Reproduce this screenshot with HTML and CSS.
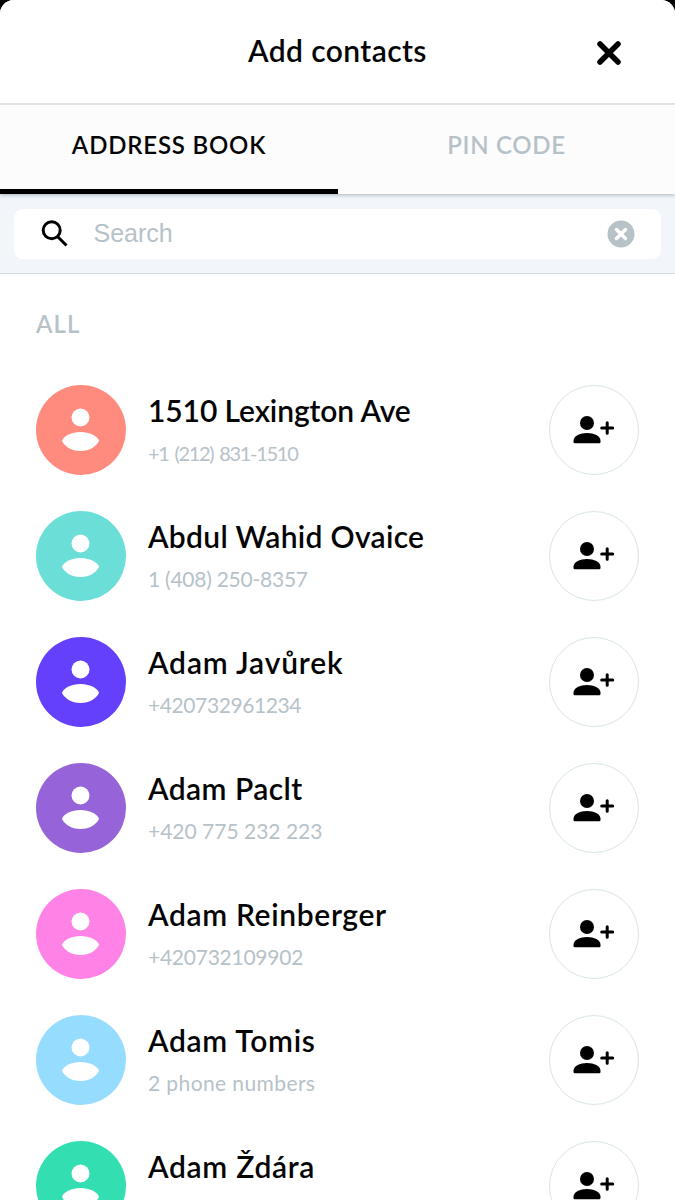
FILE: index.html
```html
<!DOCTYPE html>
<html lang="en">
<head>
<meta charset="utf-8">
<title>Add contacts</title>
<link rel="stylesheet" href="styles.css">
</head>
<body>
<svg class="symbols" aria-hidden="true">
  <symbol id="person" viewBox="0 0 90 90">
    <circle cx="44.5" cy="32.5" r="9"/>
    <path d="M26 55.700C28 50.500 35.500 47 44.500 47S61 50.500 63 55.700C61 61 53.500 66 44.500 66S28 61 26 55.700Z"/>
  </symbol>
  <symbol id="add-person" viewBox="0 0 42 28">
    <circle cx="14" cy="7" r="7"/>
    <path d="M.5 24.500C.5 20 7 17 14 17S27.500 20 27.500 24.500V26Q27.500 27.200 26.300 27.200H1.700Q.5 27.200 .5 26Z"/>
    <path class="plus" d="M34.200 6.700V17.300M28.700 12H39.700"/>
  </symbol>
</svg>
<div class="sheet">
  <header class="header">
    <h1 class="title">Add contacts</h1>
    <button class="close" aria-label="Close"><svg width="26" height="26" viewBox="0 0 26 26"><path d="M4 4L22 22M22 4L4 22"/></svg></button>
  </header>
  <nav class="tabs">
    <div class="tab active"><span class="label-address">ADDRESS BOOK</span></div>
    <div class="tab"><span class="label-pin">PIN CODE</span></div>
  </nav>
  <div class="search-bar">
    <div class="search">
      <svg class="magnifier" width="28" height="28" viewBox="0 0 28 28"><circle cx="10.700" cy="10.300" r="8.500"/><path d="M17 17L25.500 25.500"/></svg>
      <span class="placeholder">Search</span>
      <svg class="clear" width="28" height="28" viewBox="0 0 28 28"><circle cx="14" cy="14" r="13.500"/><path d="M9.500 9.500L18.500 18.500M18.500 9.500L9.500 18.500"/></svg>
    </div>
  </div>
  <main class="list">
    <h2 class="section">ALL</h2>
    <div class="contact">
      <svg class="avatar coral"><use href="#person"/></svg>
      <div class="info"><div class="name n1">1510 Lexington Ave</div><div class="phone p1">+1 (212) 831-1510</div></div>
      <button class="add" aria-label="Add"><svg width="42" height="28"><use href="#add-person"/></svg></button>
    </div>
    <div class="contact">
      <svg class="avatar teal"><use href="#person"/></svg>
      <div class="info"><div class="name n2">Abdul Wahid Ovaice</div><div class="phone p2">1 (408) 250-8357</div></div>
      <button class="add" aria-label="Add"><svg width="42" height="28"><use href="#add-person"/></svg></button>
    </div>
    <div class="contact">
      <svg class="avatar indigo"><use href="#person"/></svg>
      <div class="info"><div class="name n3">Adam Javůrek</div><div class="phone p3">+420732961234</div></div>
      <button class="add" aria-label="Add"><svg width="42" height="28"><use href="#add-person"/></svg></button>
    </div>
    <div class="contact">
      <svg class="avatar purple"><use href="#person"/></svg>
      <div class="info"><div class="name n4">Adam Paclt</div><div class="phone p4">+420 775 232 223</div></div>
      <button class="add" aria-label="Add"><svg width="42" height="28"><use href="#add-person"/></svg></button>
    </div>
    <div class="contact">
      <svg class="avatar pink"><use href="#person"/></svg>
      <div class="info"><div class="name n5">Adam Reinberger</div><div class="phone p5">+420732109902</div></div>
      <button class="add" aria-label="Add"><svg width="42" height="28"><use href="#add-person"/></svg></button>
    </div>
    <div class="contact">
      <svg class="avatar sky"><use href="#person"/></svg>
      <div class="info"><div class="name n6">Adam Tomis</div><div class="phone p6">2 phone numbers</div></div>
      <button class="add" aria-label="Add"><svg width="42" height="28"><use href="#add-person"/></svg></button>
    </div>
    <div class="contact">
      <svg class="avatar green"><use href="#person"/></svg>
      <div class="info"><div class="name n7">Adam Ždára</div></div>
      <button class="add" aria-label="Add"><svg width="42" height="28"><use href="#add-person"/></svg></button>
    </div>
  </main>
</div>
</body>
</html>
```
FILE: styles.css
```css
* { box-sizing: border-box; }
body { margin: 0; background: #000; font-family: Lato, "Open Sans", sans-serif; color: #050505; }
button { padding: 0; border: 0; background: none; }
.symbols { display: none; }
.sheet { height: 1200px; overflow: hidden; background: #fff; border-radius: 14px 14px 0 0; }
.header { position: relative; z-index: 2; height: 105px; display: grid; grid-template-columns: 120px 1fr 120px; background: #fff; border-bottom: 2px solid #e0e2e6; }
.title { grid-column: 2; margin: 30px 0 0; text-align: center; font-size: 30px; line-height: 40px; font-weight: 600; letter-spacing: .4px; white-space: nowrap; }
.close { width: 26px; height: 26px; margin: 40px 0 0 41px; }
.close svg { display: block; fill: none; stroke: #000; stroke-width: 5.500; stroke-linecap: round; }
.tabs { position: relative; height: 89px; display: grid; grid-template-columns: 338px 1fr; background: #fcfcfd; box-shadow: 0 1px 4px rgba(60, 75, 85, .4); }
.tab { padding-top: 25px; text-align: center; font-size: 24px; line-height: 30px; font-weight: 600; color: #b6c2c8; }
.tab.active { color: #050505; border-bottom: 5px solid #000; }
.label-address { letter-spacing: .8px; }
.label-pin { letter-spacing: .7px; }
.search-bar { height: 80px; padding: 15px 14px 14px; background: #f2f6fa; border-bottom: 1px solid #d5dce0; }
.search { height: 50px; padding: 0 26px; display: flex; align-items: center; background: #fff; border-radius: 9px; }
.magnifier { margin-left: 1px; fill: none; stroke: #000; stroke-width: 3; }
.placeholder { margin: 0 0 2px 24.500px; font: 25px/30px "Liberation Sans", Arial, sans-serif; color: #b6c2c8; }
.clear { margin-left: auto; fill: #b6c2c8; }
.clear path { stroke: #fff; stroke-width: 3.500; stroke-linecap: round; }
.list { padding: 0 36px; }
.section { height: 111px; margin: 0; padding-top: 35px; font-size: 24px; line-height: 30px; font-weight: 600; color: #b6c2c8; letter-spacing: 1.1px; }
.contact { height: 90px; margin-bottom: 36px; display: flex; }
.avatar { width: 90px; height: 90px; flex: none; border-radius: 50%; fill: #fff; }
.coral { background: #ff8b7f; }
.teal { background: #6bded7; }
.indigo { background: #643ffc; }
.purple { background: #9763d8; }
.pink { background: #ff82e6; }
.sky { background: #96dcff; }
.green { background: #33dfb0; }
.info { flex: 1; padding: 8px 0 0 22px; white-space: nowrap; }
.name { height: 43px; font-size: 30px; line-height: 34px; font-weight: 600; }
.n1 { letter-spacing: -.1px; }
.n2 { letter-spacing: .3px; }
.n3 { letter-spacing: .850px; }
.n4 { letter-spacing: .450px; }
.n5 { letter-spacing: .650px; }
.n6 { letter-spacing: .7px; }
.n7 { letter-spacing: .7px; }
.phone { font-size: 21px; line-height: 34px; color: #b6c2c8; }
.p1 { font-size: 20px; letter-spacing: -1.3px; word-spacing: 2px; }
.p2 { letter-spacing: -.25px; }
.p3 { letter-spacing: -.4px; }
.p5 { letter-spacing: -.250px; }
.p6 { letter-spacing: .4px; }
.add { width: 90px; height: 90px; display: flex; align-items: flex-start; padding: 29.500px 0 0 23px; border: 1px solid #d9e5e8; border-radius: 50%; }
.add svg { display: block; flex: none; }
.plus { fill: none; stroke: #000; stroke-width: 3; stroke-linecap: round; }
```
